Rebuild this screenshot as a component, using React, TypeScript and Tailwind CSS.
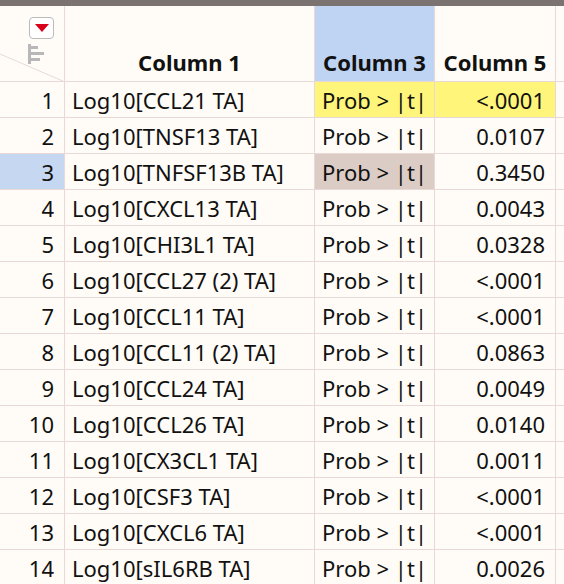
const rows: [string, string][] = [
  ["Log10[CCL21 TA]", "<.0001"],
  ["Log10[TNSF13 TA]", "0.0107"],
  ["Log10[TNFSF13B TA]", "0.3450"],
  ["Log10[CXCL13 TA]", "0.0043"],
  ["Log10[CHI3L1 TA]", "0.0328"],
  ["Log10[CCL27 (2) TA]", "<.0001"],
  ["Log10[CCL11 TA]", "<.0001"],
  ["Log10[CCL11 (2) TA]", "0.0863"],
  ["Log10[CCL24 TA]", "0.0049"],
  ["Log10[CCL26 TA]", "0.0140"],
  ["Log10[CX3CL1 TA]", "0.0011"],
  ["Log10[CSF3 TA]", "<.0001"],
  ["Log10[CXCL6 TA]", "<.0001"],
  ["Log10[sIL6RB TA]", "0.0026"],
];

const cell = "border-b border-r border-[#e8d9d6] h-[36px] flex items-center";

export default function App() {
  return (
    <div className="w-[564px] h-[584px] overflow-hidden bg-[#fffcf7] text-[22px] leading-none text-[#111] font-['Lato',sans-serif]">
      <div className="h-[6px] bg-[#7b7371]" />
      <div className="grid grid-cols-[65px_250px_120px_121px_1fr]">
        <div className="relative h-[76px] border-b border-r border-[#e8d9d6] overflow-hidden">
          <svg className="absolute inset-0" width="65" height="76">
            <line x1="0" y1="48" x2="65" y2="76" stroke="#e8d9d6" strokeWidth="1" />
          </svg>
          <div className="absolute left-[29px] top-[11px] w-[25px] h-[22px] rounded-[4px] border border-[#bbb] bg-white flex items-center justify-center">
            <svg width="14" height="9"><polygon points="0,0 14,0 7,8" fill="#d9001b" /></svg>
          </div>
          <svg className="absolute left-[28px] top-[38px]" width="20" height="22">
            <rect x="0" y="0" width="3" height="20" fill="#b8b8b8" />
            <rect x="0" y="2" width="10" height="3" fill="#b8b8b8" />
            <rect x="0" y="8" width="16" height="3" fill="#b8b8b8" />
            <rect x="0" y="14" width="12" height="3" fill="#b8b8b8" />
          </svg>
        </div>
        <div className="h-[76px] border-b border-r border-[#e8d9d6] flex items-end justify-center pb-[8px] font-bold">Column 1</div>
        <div className="h-[76px] border-b border-r border-[#e8d9d6] bg-[#bfd3f3] flex items-end justify-center pb-[8px] font-bold">Column 3</div>
        <div className="h-[76px] border-b border-r border-[#e8d9d6] flex items-end justify-center pb-[8px] font-bold">Column 5</div>
        <div className="h-[76px] border-b border-[#e8d9d6]" />
        {rows.map(([name, p], i) => (
          <div key={i} className="contents">
            <div className={`${cell} justify-end pr-[10px] ${i === 2 ? "bg-[#c6d7f2]" : ""}`}>{i + 1}</div>
            <div className={`${cell} pl-[7px]`}>{name}</div>
            <div className={`${cell} pl-[7px] ${i === 0 ? "bg-[#fff57a]" : i === 2 ? "bg-[#dcccc6]" : ""}`}>Prob &gt; |t|</div>
            <div className={`${cell} justify-end pr-[10px] ${i === 0 ? "bg-[#fff57a]" : ""}`}>{p}</div>
            <div className="border-b border-[#e8d9d6] h-[36px]" />
          </div>
        ))}
      </div>
    </div>
  );
}
